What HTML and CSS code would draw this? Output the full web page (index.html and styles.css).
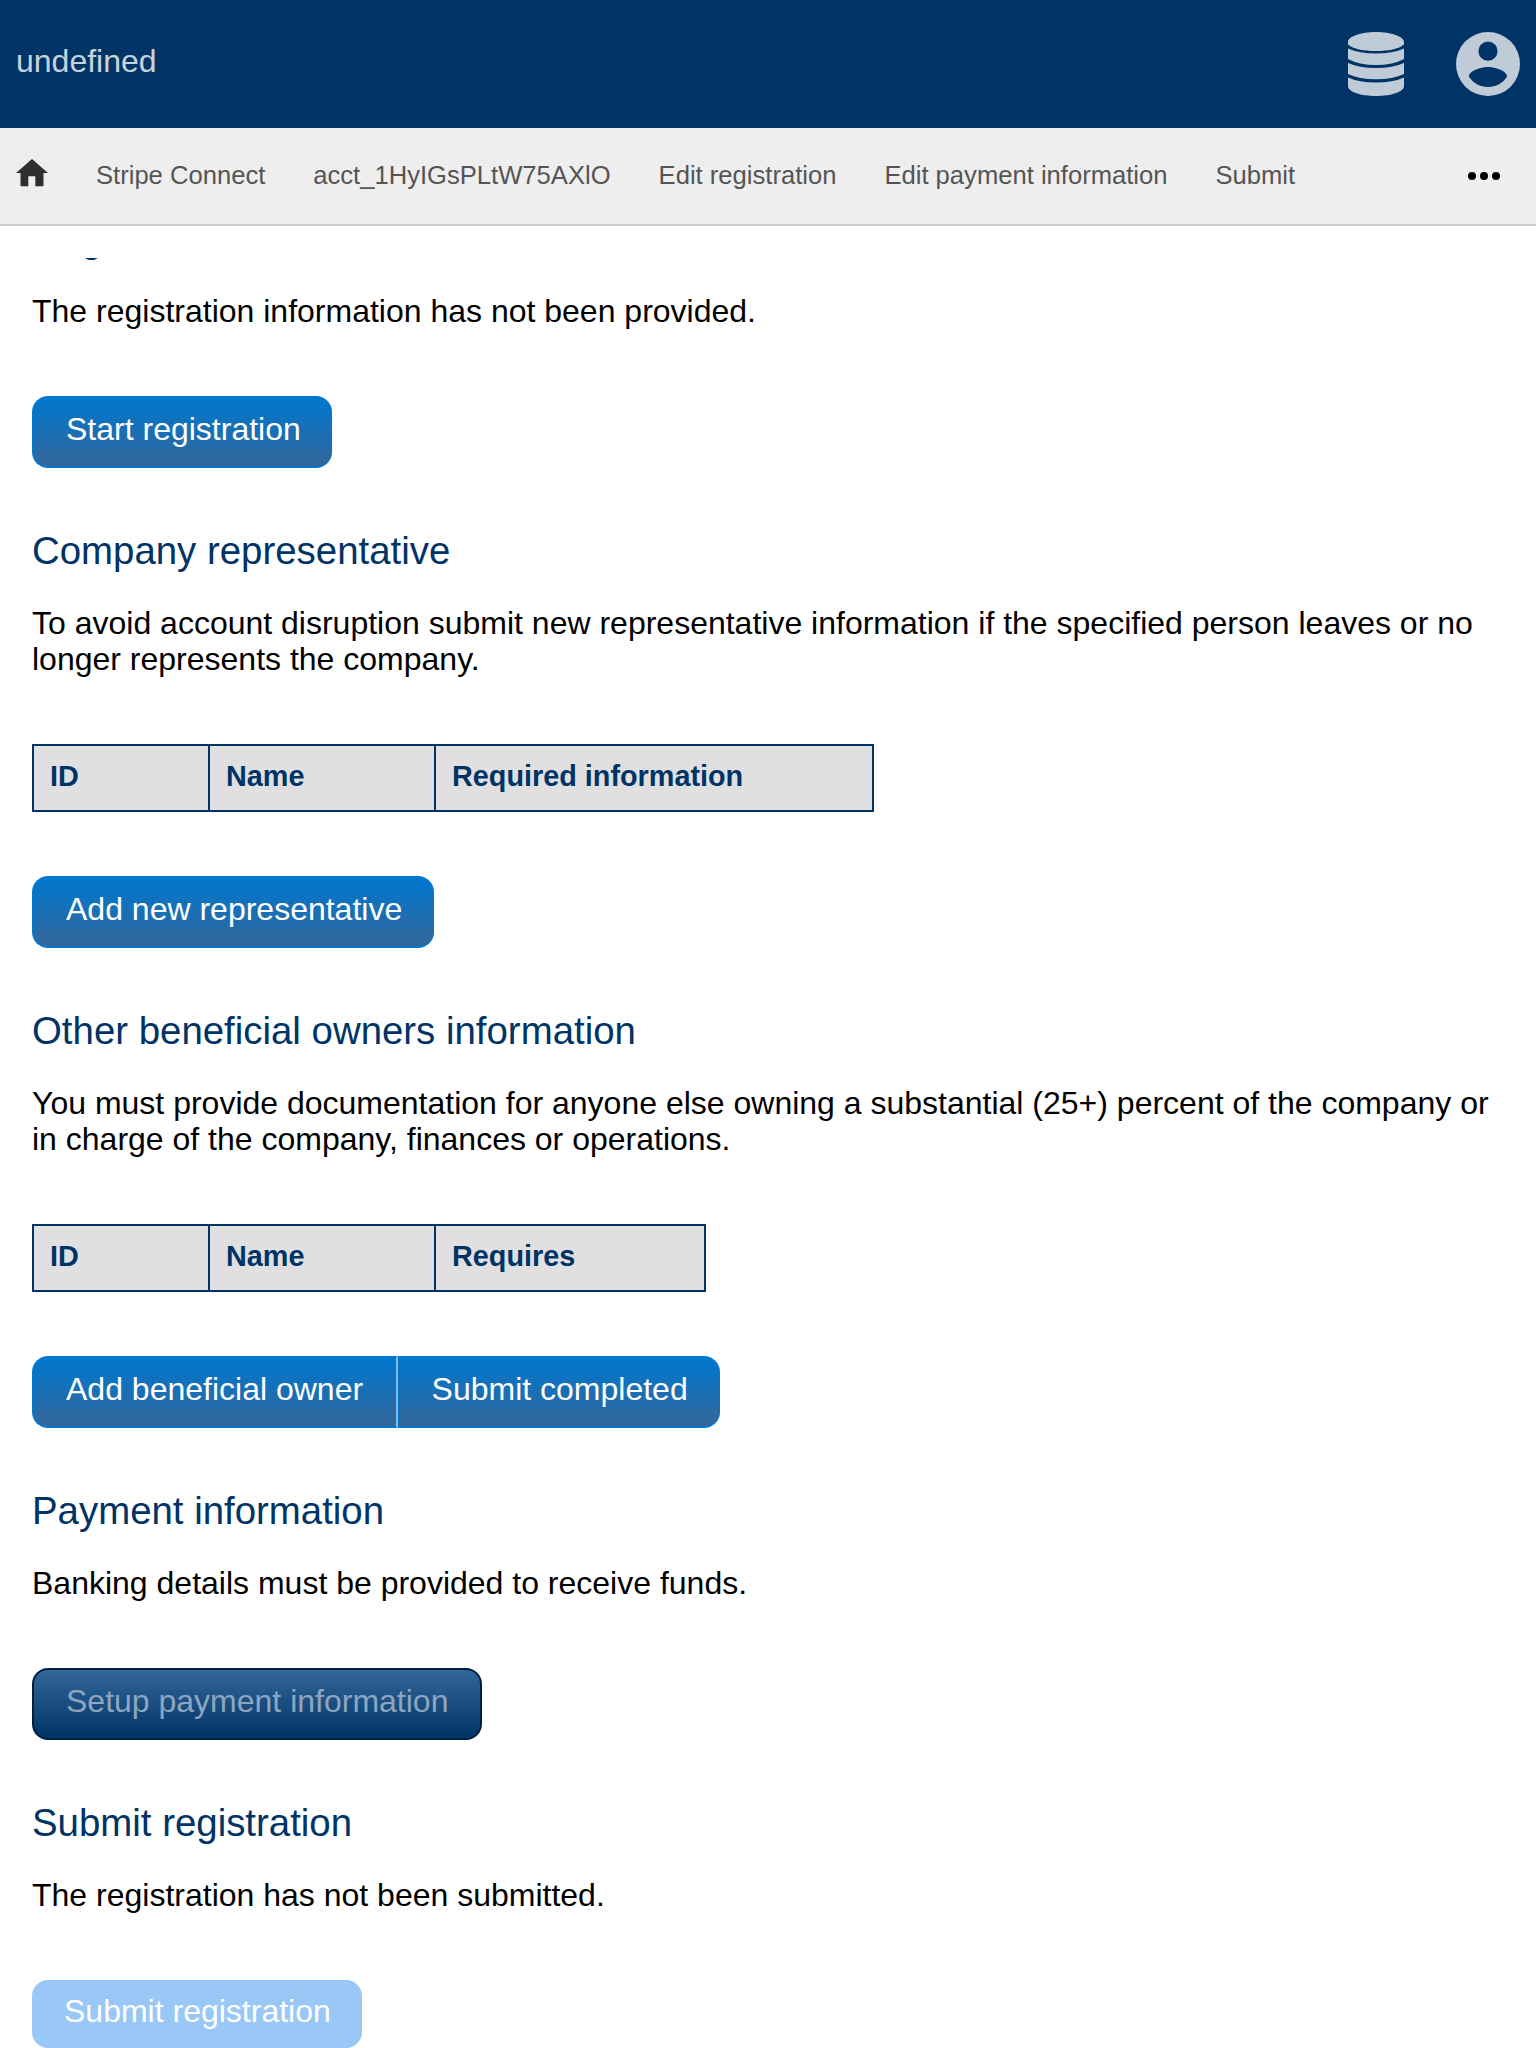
FILE: index.html
```html
<!DOCTYPE html>
<html lang="en">
<head>
<meta charset="utf-8">
<title>Stripe Connect</title>
<link rel="stylesheet" href="styles.css">
</head>
<body>
<header class="header">
  <div class="title">undefined</div>
  <div class="menus">
    <svg class="icon-db" viewBox="0 0 56 64"><path d="M28 0C43 0 56 4.500 56 10V12.500C51 17 40 19 28 19C16 19 5 17 0 12.500V10C0 4.500 13 0 28 0ZM0 16.500Q11 21.500 28 21.500Q45 21.500 56 16.500V27Q45 33 28 33Q11 33 0 27ZM0 31Q11 36 28 36Q45 36 56 31V42Q45 47.300 28 47.300Q11 47.300 0 42ZM0 45.500Q11 50.500 28 50.500Q45 50.500 56 45.500V54C56 60 43 64 28 64C13 64 0 60 0 54Z"/></svg>
    <svg class="icon-user" viewBox="0 0 64 64"><path fill-rule="evenodd" d="M32 0a32 32 0 1 0 0 64a32 32 0 1 0 0-64ZM32 9.500a9.600 9.600 0 1 1 0 19.200a9.600 9.600 0 1 1 0-19.200ZM32 55C24 55 17 51 12.900 44.500C13 38.500 25.500 35 32 35C38.500 35 51 38.500 51.100 44.500C47 51 40 55 32 55Z"/></svg>
  </div>
</header>
<nav class="nav">
  <a class="home"><svg class="icon-home" viewBox="0 0 32 28"><path d="M16 0L32 14H27.500V27.200H19.300V17.200H12.300V27.200H4.500V14H0Z"/></svg></a>
  <a>Stripe Connect</a>
  <a>acct_1HyIGsPLtW75AXlO</a>
  <a>Edit registration</a>
  <a>Edit payment information</a>
  <a>Submit</a>
  <svg class="icon-more" viewBox="0 0 32 8"><circle cx="4" cy="4" r="4"/><circle cx="16" cy="4" r="4"/><circle cx="28" cy="4" r="4"/></svg>
</nav>
<main class="content">
  <section class="section scrolled">
    <h2>Registration</h2>
    <p>The registration information has not been provided.</p>
    <div class="buttons"><a class="button">Start registration</a></div>
  </section>
  <section class="section">
    <h2>Company representative</h2>
    <p>To avoid account disruption submit new representative information if the specified person leaves or no longer represents the company.</p>
    <table class="table">
      <tr><th class="col-id">ID</th><th class="col-name">Name</th><th class="col-required">Required information</th></tr>
    </table>
    <div class="buttons"><a class="button">Add new representative</a></div>
  </section>
  <section class="section">
    <h2>Other beneficial owners information</h2>
    <p>You must provide documentation for anyone else owning a substantial (25+) percent of the company or in charge of the company, finances or operations.</p>
    <table class="table">
      <tr><th class="col-id">ID</th><th class="col-name">Name</th><th class="col-requires">Requires</th></tr>
    </table>
    <div class="buttons"><a class="button">Add beneficial owner</a><a class="button">Submit completed</a></div>
  </section>
  <section class="section">
    <h2>Payment information</h2>
    <p>Banking details must be provided to receive funds.</p>
    <div class="buttons"><a class="button active">Setup payment information</a></div>
  </section>
  <section class="section">
    <h2>Submit registration</h2>
    <p>The registration has not been submitted.</p>
    <div class="buttons"><button class="button disabled" disabled>Submit registration</button></div>
  </section>
</main>
</body>
</html>
```
FILE: styles.css
```css
* { box-sizing: border-box; }
body {
  margin: 0;
  height: 2048px;
  overflow: hidden;
  display: flex;
  flex-direction: column;
  background: #fff;
  color: #000;
  font: 32px/36px "Liberation Sans", Arial, sans-serif;
}
.header {
  flex: none;
  height: 128px;
  padding: 0 16px;
  display: flex;
  align-items: center;
  justify-content: space-between;
  background: #036;
}
.title { color: rgba(255, 255, 255, .8); padding-bottom: 6px; }
.menus { display: flex; gap: 52px; fill: #c0cbd8; }
.icon-db { width: 56px; height: 64px; }
.icon-user { width: 64px; height: 64px; }
.nav {
  flex: none;
  height: 98px;
  padding: 0 36px 0 16px;
  display: flex;
  align-items: center;
  gap: 48px;
  background: #eee;
  border-bottom: 2px solid #ccc;
  color: #555;
  font-size: 25.6px;
}
.nav a { padding-bottom: 2px; }
.nav .home { display: flex; width: 32px; padding-bottom: 7px; }
.icon-home { width: 32px; height: 28px; fill: #2e2e2e; }
.icon-more { width: 32px; height: 8px; margin-left: auto; }
.content {
  flex: 1;
  min-height: 0;
  margin-top: 32px;
  padding: 0 32px;
  overflow: hidden;
}
.section { margin-bottom: 61px; }
.scrolled { margin-top: -41px; }
h2 {
  margin: 0 0 32px;
  color: #036;
  font-size: 38.4px;
  font-weight: 400;
  line-height: 44px;
}
p { margin: 0 0 67px; }
.table { margin: 0 0 64px; border-collapse: collapse; color: #036; font-size: 28.8px; }
.table th {
  height: 66px;
  padding: 0 16px 4px;
  border: 2px solid #036;
  background: #e0e0e0;
  text-align: left;
}
.col-id { width: 176px; }
.col-name { width: 226px; }
.col-required { width: 438px; }
.col-requires { width: 270px; }
.buttons { display: flex; }
.button {
  height: 72px;
  padding: 13px 31.5px 19px 32px;
  border: 2px solid #0078d0;
  border-right-width: 0;
  background: linear-gradient(#0078d0, #369);
  color: #fff;
  font: inherit;
}
.button:first-child { border-radius: 16px 0 0 16px; }
.button:last-child { border-radius: 0 16px 16px 0; }
.button:only-child { border-radius: 16px; }
.button:first-child:not(:only-child) { border-right: 2px solid #8ab8e0; padding-right: 32.5px; }
.button + .button { padding-right: 32.5px; }
.button.active {
  border: 2px solid #012040;
  background: linear-gradient(#369, #036);
  color: #8ca6c1;
}
.button.disabled { width: 330px; height: 68px; border: 0; background: #99c8f7; white-space: nowrap; }
```
